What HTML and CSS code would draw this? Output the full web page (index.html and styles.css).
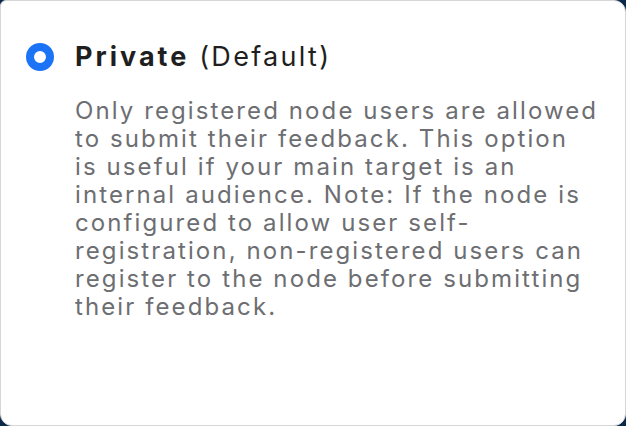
FILE: index.html
```html
<!DOCTYPE html>
<html lang="en">
<head>
<meta charset="utf-8">
<title>Private</title>
<link rel="stylesheet" href="styles.css">
</head>
<body>
<div class="card">
  <label class="option">
    <span class="radio"></span>
    <span class="title"><strong>Private</strong> (Default)</span>
  </label>
  <p class="desc">Only registered node users are allowed<br>to submit their feedback. This option<br>is useful if your main target is an<br>internal audience. Note: If the node is<br>configured to allow user self-<br>registration, non-registered users can<br>register to the node before submitting<br>their feedback.</p>
</div>
</body>
</html>
```
FILE: styles.css
```css
html, body {
  margin: 0;
  padding: 0;
  background: #0b2a4a;
  width: 626px;
  height: 426px;
  overflow: hidden;
}
.card {
  box-sizing: border-box;
  width: 626px;
  height: 426px;
  background: #ffffff;
  border: 1px solid #d6d6d6;
  border-radius: 6px 12px 12px 12px;
  padding: 41px 20px 0 25px;
  font-family: "Inter", "Liberation Sans", sans-serif;
}
.option {
  display: flex;
  align-items: center;
  gap: 21px;
  height: 30px;
}
.radio {
  box-sizing: border-box;
  width: 28px;
  height: 28px;
  border-radius: 50%;
  border: 8.5px solid #1b74f5;
  background: #fff;
  flex: none;
}
.title {
  font-size: 27px;
  line-height: 30px;
  letter-spacing: 2.3px;
  color: #1f1f21;
}
.title strong {
  font-weight: 700;
  letter-spacing: 3px;
}
.desc {
  margin: 25px 0 0 49px;
  font-size: 24px;
  line-height: 28px;
  letter-spacing: 2.1px;
  color: #6d6e72;
  width: 540px;
  white-space: nowrap;
}
```
